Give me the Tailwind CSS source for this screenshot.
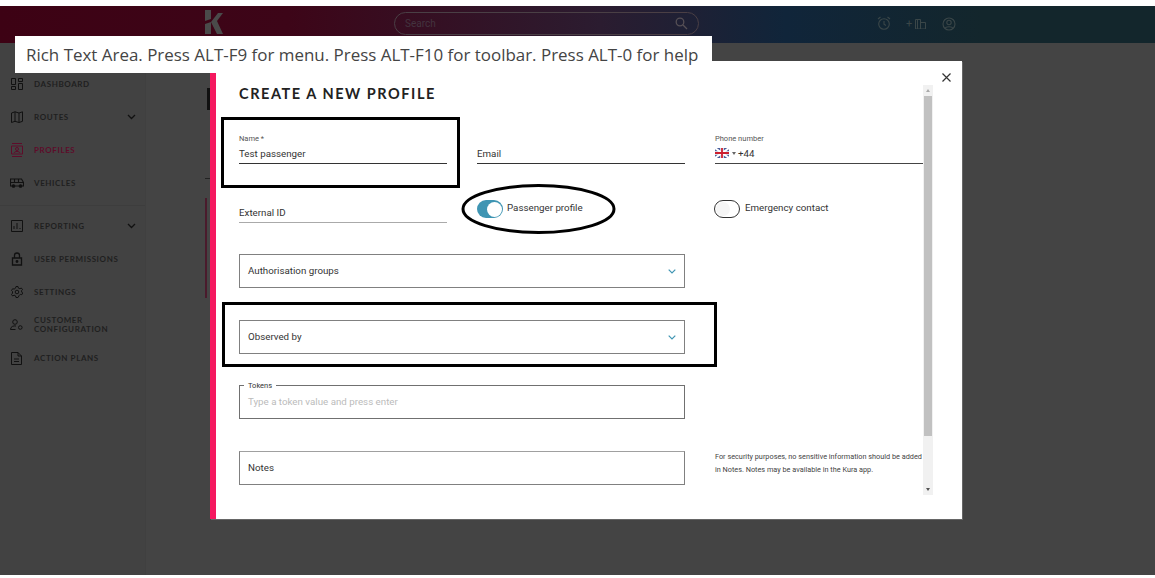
<!DOCTYPE html>
<html lang="en">
  <head>
    <meta charset="UTF-8" />
    <title>Create a new profile</title>
    <script src="https://cdn.jsdelivr.net/npm/@tailwindcss/browser@4"></script>
  </head>
  <body class="bg-white font-[family-name:Roboto] overflow-hidden">
    <div class="relative h-[578px] w-[1155px] overflow-hidden pt-[6px]">
      <!-- Header -->
      <header class="relative h-[37px] bg-[linear-gradient(90deg,#3d0214_0%,#3d0518_25%,#2b1c30_52%,#10253a_68%,#13262c_85%)]">
        <svg class="absolute left-[204px] top-[4px]" width="20" height="24" viewBox="0 0 20 24" fill="#4a4a4a">
          <path d="M1 0h6v9L1 11zM1 14l6-2v12H1zM7 12 14 3h5l-6 8 6 13h-6z" />
        </svg>
        <div class="absolute left-[394px] top-[6px] flex h-[23px] w-[305px] items-center justify-between rounded-full border border-[#4a3f45] pl-[10px] pr-[10px]">
          <span class="text-[10px] text-[#43343f]">Search</span>
          <svg width="13" height="13" viewBox="0 0 13 13" fill="none" stroke="#554f55" stroke-width="1.3">
            <circle cx="5" cy="5" r="3.8" /><path d="m8 8 4 4" />
          </svg>
        </div>
        <div class="absolute left-[877px] top-[10px] flex items-center gap-[15px] text-[#3a4648]">
          <svg width="14" height="15" viewBox="0 0 14 15" fill="none" stroke="currentColor" stroke-width="1.1">
            <circle cx="7" cy="8" r="5.3" /><path d="M7 5v3.3l2 1.200M1 3l2.500-2M13 3l-2.500-2" />
          </svg>
          <div class="flex items-center gap-[3px]">
            <span class="text-[11px] leading-none">+</span>
            <svg width="11" height="10" viewBox="0 0 11 10" fill="none" stroke="currentColor">
              <path d="M.5.500h5v9.500h-5zM2.500 0v10M5.500 3.500h5V10h-5z" />
            </svg>
          </div>
          <svg class="ml-[1px]" width="14" height="14" viewBox="0 0 14 14" fill="none" stroke="currentColor" stroke-width="1.1">
            <circle cx="7" cy="7" r="6" /><circle cx="7" cy="5.500" r="2.200" /><path d="M3 11.500c1-2.400 7-2.400 8 0" />
          </svg>
        </div>
      </header>

      <!-- Page behind the dialog -->
      <div class="flex h-[532px] bg-[#444444]">
        <nav class="w-[146px] shrink-0 border-r border-[#404040] bg-[#424242] pt-[24.5px] font-[family-name:Lato] text-[8px] font-bold tracking-[0.6px] text-[#1f1f1f]">
          <div class="flex h-[33px] items-center gap-[11px] pl-[11px]">
            <svg width="12" height="12" viewBox="0 0 12 12" fill="none" stroke="#111111" stroke-width="1"><path d="M.5.500h4v6h-4zM7.500.500h4v3h-4zM7.500 5.500h4v6h-4zM.5 8.500h4v3h-4z" /></svg>
            <span>DASHBOARD</span>
          </div>
          <div class="flex h-[33px] items-center gap-[11px] pl-[11px]">
            <svg width="12" height="12" viewBox="0 0 12 12" fill="none" stroke="#111111" stroke-width="1"><path d="M.5 2 4 .8l4 1.200 3.500-1.200v9.500L8 11.500l-4-1.200-3.500 1.200zM4 .8v9.500M8 2v9.500" /></svg>
            <span class="grow">ROUTES</span>
            <svg class="mr-[9px]" width="9" height="6" viewBox="0 0 9 6" fill="none" stroke="#111111" stroke-width="1.3"><path d="m1 1 3.500 3.500L8 1" /></svg>
          </div>
          <div class="flex h-[33px] items-center gap-[11px] pl-[11px] text-[#5e0c2a]">
            <svg width="12" height="14" viewBox="0 0 12 14" fill="none" stroke="#5e0c2a" stroke-width="1"><path d="M1 .5h10M1 13.500h10M.5 3h11v8H.5z" /><circle cx="6" cy="6" r="1.500" /><path d="M3 10c.5-2 5.500-2 6 0" /></svg>
            <span>PROFILES</span>
          </div>
          <div class="flex h-[33px] items-center gap-[10px] pl-[10px]">
            <svg width="14" height="10" viewBox="0 0 14 10" fill="none" stroke="#111111" stroke-width="1.1"><path d="M.5 1h11l2 3.500V8H.5zM.5 4.500h13M4.500 1v3.500M8.500 1v3.500" /><circle cx="3.500" cy="8" r="1.300" fill="#111111" /><circle cx="10.500" cy="8" r="1.300" fill="#111111" /></svg>
            <span>VEHICLES</span>
          </div>
          <div class="mt-[5px] mb-[4px] h-[1px] bg-[#3d3d3d]"></div>
          <div class="flex h-[33px] items-center gap-[11px] pl-[11px]">
            <svg width="12" height="12" viewBox="0 0 12 12" fill="none" stroke="#111111" stroke-width="1"><path d="M.5.500h11v11H.5zM3 9V6M6 9V3M9 9V8" /></svg>
            <span class="grow">REPORTING</span>
            <svg class="mr-[9px]" width="9" height="6" viewBox="0 0 9 6" fill="none" stroke="#111111" stroke-width="1.3"><path d="m1 1 3.500 3.500L8 1" /></svg>
          </div>
          <div class="flex h-[33px] items-center gap-[11px] pl-[11px]">
            <svg width="12" height="14" viewBox="0 0 12 14" fill="none" stroke="#111111" stroke-width="1.300"><path d="M1.500 6h9v7h-9zM3.500 6V3.500a2.500 2.500 0 0 1 5 0V6" /><circle cx="6" cy="9.500" r=".8" fill="#111111" /></svg>
            <span>USER PERMISSIONS</span>
          </div>
          <div class="flex h-[33px] items-center gap-[11px] pl-[11px]">
            <svg width="12" height="12" viewBox="0 0 12 12" fill="none" stroke="#111111" stroke-width="1"><path d="M5 .5h2l.4 1.600 1.500.6L10.300 2 11.500 3.500l-1 1.200.2 1.300 1 1-.9 1.700-1.500-.4-1 1L7 11.500H5l-.4-1.600-1.500-.7-1.400.8L.5 8.500l1-1.300V5.500l-1-1L1.700 2.700l1.400.4 1.400-.9z" /><circle cx="6" cy="6" r="1.800" /></svg>
            <span>SETTINGS</span>
          </div>
          <div class="flex h-[33px] items-center gap-[11px] pl-[10px]">
            <svg width="13" height="12" viewBox="0 0 13 12" fill="none" stroke="#111111" stroke-width="1"><circle cx="5" cy="3" r="2.300" /><path d="M.5 10.500c0-3 3-4 5.500-3.500M.5 10.500h5" /><circle cx="10.300" cy="8.500" r="1.800" /></svg>
            <span class="leading-[9.500px]">CUSTOMER<br />CONFIGURATION</span>
          </div>
          <div class="flex h-[33px] items-center gap-[12px] pl-[11px]">
            <svg width="11" height="13" viewBox="0 0 11 13" fill="none" stroke="#111111" stroke-width="1"><path d="M.5.500h6.500L10.500 4v8.500H.5zM7 .500V4h3.500M3 7h5M3 9.500h5" /></svg>
            <span>ACTION PLANS</span>
          </div>
        </nav>
      </div>

      <!-- Slivers of the page left of the dialog -->
      <div class="absolute left-[207px] top-[88px] h-[22px] w-[3px] bg-[#111111]"></div>
      <div class="absolute left-[205px] top-[178px] h-[1px] w-[5px] bg-[#222222]"></div>
      <div class="absolute left-[205px] top-[198px] h-[100px] w-[2px] bg-[#4a1a2c]"></div>

      <!-- Dialog -->
      <div class="absolute left-[210px] top-[61px] h-[458px] w-[752px] border-l-[6px] border-[#f5185f] bg-white shadow-[1px_1px_0_#666666]">
        <div class="absolute left-[23px] right-[39px] top-0 text-[#333333]">
          <h2 class="mt-[25px] h-[34px] font-[family-name:Lato] text-[14.5px] leading-[16px] font-bold tracking-[1.550px] text-[#222222]">CREATE A NEW PROFILE</h2>

          <div class="grid grid-cols-[208px_208px_208px] gap-x-[30px] text-[9.750px] leading-[12px]">
            <!-- Row 1 -->
            <div class="h-[44px] pt-[14px]">
              <div class="text-[7.500px] leading-[9px] text-[#555555]">Name *</div>
              <div class="mt-[5px] h-[16px] border-b border-[#333333] text-[#333333]">Test passenger</div>
            </div>
            <div class="h-[44px] pt-[28px]">
              <div class="h-[16px] border-b border-[#333333]">Email</div>
            </div>
            <div class="h-[44px] pt-[14px]">
              <div class="text-[7.500px] leading-[9px] text-[#555555]">Phone number</div>
              <div class="mt-[5px] flex h-[16px] items-start border-b border-[#444444]">
                <svg class="shrink-0" width="14" height="10" viewBox="0 0 14 10">
                  <rect width="14" height="10" fill="#4a5f9b" />
                  <path d="M0 0l14 10M14 0 0 10" stroke="#ffffff" stroke-width="2" />
                  <path d="M7 0v10M0 5h14" stroke="#ffffff" stroke-width="3.500" />
                  <path d="M7 0v10M0 5h14" stroke="#cc1f2f" stroke-width="1.800" />
                </svg>
                <span class="mt-[4px] ml-[3px] h-0 w-0 border-x-[2px] border-t-[3px] border-x-transparent border-t-[#666666]"></span>
                <span class="ml-[2px]">+44</span>
              </div>
            </div>

            <!-- Row 2 -->
            <div class="h-[59px] pt-[43px]">
              <div class="h-[16px] border-b border-[#aaaaaa]">External ID</div>
            </div>
            <div class="flex h-[59px] items-start pt-[36px]">
              <span class="flex h-[18px] w-[26px] items-center justify-end rounded-full bg-[#3f95b3] pr-[1px]">
                <span class="h-[15px] w-[15px] rounded-full bg-white"></span>
              </span>
              <span class="ml-[4px] mt-[2px]">Passenger profile</span>
            </div>
            <div class="flex h-[59px] items-start pt-[36px]">
              <span class="-ml-[1px] flex h-[18px] w-[26px] items-center rounded-full border border-[#333333] bg-white pl-[1px]">
                <span class="h-[14px] w-[14px] rounded-full bg-[#f5f5f5]"></span>
              </span>
              <span class="ml-[5px] mt-[2px]">Emergency contact</span>
            </div>

            <!-- Selects, tokens, notes -->
            <div class="col-span-2 mt-[31px] flex h-[34px] items-center justify-between border border-[#808080] pl-[8px] pr-[8px]">
              <span>Authorisation groups</span>
              <svg width="8" height="5" viewBox="0 0 8 5" fill="none" stroke="#3f95b3" stroke-width="1.200"><path d="m.7.7 3.300 3.300L7.300.7" /></svg>
            </div>
            <div></div>
            <div class="col-span-2 mt-[32px] flex h-[34px] items-center justify-between border border-[#808080] pl-[8px] pr-[8px]">
              <span>Observed by</span>
              <svg width="8" height="5" viewBox="0 0 8 5" fill="none" stroke="#3f95b3" stroke-width="1.200"><path d="m.7.7 3.300 3.300L7.300.7" /></svg>
            </div>
            <div></div>
            <div class="relative col-span-2 mt-[31px] flex h-[34px] items-center border border-[#707070] pl-[8px] text-[#bbbbbb]">
              <span class="absolute -top-[5px] left-[4px] bg-white px-[4px] text-[7.500px] leading-[9px] text-[#333333]">Tokens</span>
              <span>Type a token value and press enter</span>
            </div>
            <div></div>
            <div class="col-span-2 mt-[32px] flex h-[34px] items-center border border-[#808080] border-t-[#a0a0a0] pl-[8px]">
              <span>Notes</span>
            </div>
            <div class="mt-[32px] text-[7.300px] leading-[12.500px] whitespace-nowrap text-[#444444]">For security purposes, no sensitive information should be added<br />in Notes. Notes may be available in the Kura app.</div>
          </div>
        </div>

        <!-- Scrollbar -->
        <div class="absolute left-[707px] top-[24px] flex h-[410px] w-[10px] flex-col items-center bg-[#f1f1f1]">
          <span class="mt-[4px] h-0 w-0 border-x-[2px] border-b-[3px] border-x-transparent border-b-[#aaaaaa]"></span>
          <span class="mt-[4px] h-[340px] w-[8px] bg-[#c1c1c1]"></span>
          <span class="mt-auto mb-[4px] h-0 w-0 border-x-[2px] border-t-[3px] border-x-transparent border-t-[#555555]"></span>
        </div>

        <!-- Close -->
        <svg class="absolute left-[726px] top-[12px]" width="9" height="9" viewBox="0 0 9 9" fill="none" stroke="#333333" stroke-width="1.200"><path d="m.5.500 8 8M8.500.500l-8 8" /></svg>
      </div>

      <!-- Screen reader banner on top -->
      <div class="absolute left-[15px] top-[36px] h-[37px] w-[669px] bg-white"></div>
      <div class="absolute left-[684px] top-[36px] h-[25px] w-[28px] bg-white"></div>
      <div class="absolute left-[26px] top-[43px] font-[family-name:'Open_Sans'] text-[16.950px] leading-[24px] whitespace-nowrap text-[#444444]">Rich Text Area. Press ALT-F9 for menu. Press ALT-F10 for toolbar. Press ALT-0 for help</div>

      <!-- Review annotations -->
      <div class="absolute left-[221px] top-[117px] h-[71px] w-[239px] border-[3px] border-black"></div>
      <div class="absolute left-[222px] top-[302px] h-[65px] w-[495px] border-[3px] border-black"></div>
      <svg class="absolute left-[460px] top-[183px]" width="157" height="52" viewBox="0 0 157 52" fill="none">
        <ellipse cx="78.500" cy="26" rx="75.500" ry="23.500" stroke="#000000" stroke-width="3" />
      </svg>
      <div class="absolute left-0 top-[575px] h-[3px] w-full bg-white"></div>
    </div>
  </body>
</html>
